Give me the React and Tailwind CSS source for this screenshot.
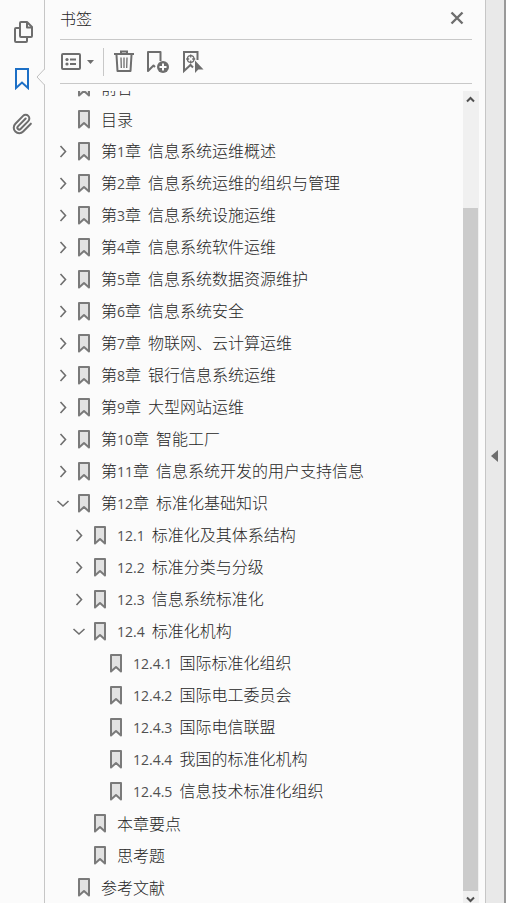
import { useState } from "react"

const BOOKMARKS = [
  { title: "前言" },
  { title: "目录" },
  { title: "第1章  信息系统运维概述", closed: true },
  { title: "第2章  信息系统运维的组织与管理", closed: true },
  { title: "第3章  信息系统设施运维", closed: true },
  { title: "第4章  信息系统软件运维", closed: true },
  { title: "第5章  信息系统数据资源维护", closed: true },
  { title: "第6章  信息系统安全", closed: true },
  { title: "第7章  物联网、云计算运维", closed: true },
  { title: "第8章  银行信息系统运维", closed: true },
  { title: "第9章  大型网站运维", closed: true },
  { title: "第10章  智能工厂", closed: true },
  { title: "第11章  信息系统开发的用户支持信息", closed: true },
  {
    title: "第12章  标准化基础知识",
    children: [
      { title: "12.1  标准化及其体系结构", closed: true },
      { title: "12.2  标准分类与分级", closed: true },
      { title: "12.3  信息系统标准化", closed: true },
      {
        title: "12.4  标准化机构",
        children: [
          { title: "12.4.1  国际标准化组织" },
          { title: "12.4.2  国际电工委员会" },
          { title: "12.4.3  国际电信联盟" },
          { title: "12.4.4  我国的标准化机构" },
          { title: "12.4.5  信息技术标准化组织" },
        ],
      },
      { title: "本章要点" },
      { title: "思考题" },
    ],
  },
  { title: "参考文献" },
]

function PagesIcon() {
  return (
    <svg width="24" height="24" viewBox="0 0 24 24" fill="none" stroke="#6e6e6e" strokeWidth="2" strokeLinejoin="round">
      <path d="M9 8H6Q5 8 5 9V21Q5 22 6 22H16Q17 22 17 21V18" />
      <path d="M10 3Q10 2 11 2H17L22 7V16Q22 17 21 17H11Q10 17 10 16Z" />
      <path d="M17 2.500V7.500H21.500" />
    </svg>
  )
}

function RibbonIcon() {
  return (
    <svg width="16" height="24" viewBox="0 0 16 24" fill="none" stroke="#1c6fc6" strokeWidth="2">
      <path d="M2 3H14V22L8 16.500L2 22Z" />
    </svg>
  )
}

function ClipIcon() {
  return (
    <svg width="22" height="24" viewBox="0 0 24 24" fill="none" stroke="#6e6e6e" strokeWidth="2.200" strokeLinecap="round">
      <path d="M16 6L7.586 14.586A2 2 0 0 0 10.415 17.415L18.829 8.829A4 4 0 1 0 13.172 3.172L4.793 11.723A6 6 0 1 0 13.278 20.208L21.657 11.657" />
    </svg>
  )
}

function OptionsIcon() {
  return (
    <svg width="34" height="20" viewBox="0 0 34 20" fill="none">
      <rect x="2" y="2" width="18" height="15" rx="1" stroke="#6e6e6e" strokeWidth="2" />
      <circle cx="7" cy="7.500" r="1.600" fill="#6e6e6e" />
      <circle cx="7" cy="12" r="1.600" fill="#6e6e6e" />
      <path d="M10 7.500H16M10 12H16" stroke="#6e6e6e" strokeWidth="2" />
      <path d="M27 8H34L30.500 12Z" fill="#6e6e6e" />
    </svg>
  )
}

function TrashIcon() {
  return (
    <svg width="20" height="24" viewBox="0 0 20 24" fill="none" stroke="#6e6e6e" strokeWidth="2">
      <path d="M0 4H20M7 4V1.500H13V4" />
      <path d="M2.500 5L3.500 21H16.500L17.500 5" strokeLinejoin="round" />
      <path d="M7 7.500L7.300 18M10 7.500V18M13 7.500L12.700 18" strokeWidth="1.300" />
    </svg>
  )
}

function AddIcon() {
  return (
    <svg width="24" height="24" viewBox="0 0 24 24" fill="none">
      <path d="M9 17L7.500 15.500L2 21V2H14.500V11" stroke="#6e6e6e" strokeWidth="2" strokeLinejoin="round" />
      <circle cx="17" cy="17" r="6" fill="#6e6e6e" />
      <path d="M17 13.500V20.500M13.500 17H20.500" stroke="#fff" strokeWidth="2" />
    </svg>
  )
}

function TargetIcon() {
  return (
    <svg width="22" height="24" viewBox="0 0 22 24" fill="none">
      <path d="M11 17.500L8.500 15L2 21V2H15.500V10" stroke="#6e6e6e" strokeWidth="2" />
      <circle cx="8.700" cy="9" r="3.300" stroke="#6e6e6e" strokeWidth="1.300" />
      <path d="M8.700 4.500V7.500M8.700 10.500V13.500M4.200 9H7.200M10.200 9H13.200" stroke="#6e6e6e" strokeWidth="1.300" />
      <path d="M13 10.500V23L16.300 19.500H21.500Z" fill="#6e6e6e" />
    </svg>
  )
}

function BookmarkIcon() {
  return (
    <svg className="shrink-0" width="14" height="20" viewBox="0 0 14 20">
      <path d="M2 2H12V18.500L7 14L2 18.500Z" fill="#e2e2e2" stroke="#7a7a7a" strokeWidth="2" strokeLinejoin="round" />
    </svg>
  )
}

// Numbers are set a little smaller than the Chinese text around them
function Title({ text }) {
  return text.split(/([\d.]+)/).map((part, i) =>
    i % 2 ? (
      <span key={i} className="text-[14px] font-normal text-[#505050] font-['Open_Sans','Noto_Sans_CJK_SC',sans-serif]">{part}</span>
    ) : (
      part
    )
  )
}

function TreeItem({ item }) {
  const [open, setOpen] = useState(!item.closed)
  const hasToggle = item.closed || item.children

  return (
    <li>
      <div className="flex h-8 items-center">
        {hasToggle ? (
          <button
            className="flex h-4 w-4 shrink-0 items-center justify-center"
            aria-label={item.title}
            aria-expanded={open}
            onClick={() => setOpen(!open)}>
            <svg width="16" height="16" viewBox="0 0 16 16" fill="none" stroke="#6e6e6e" strokeWidth="1.600">
              <path d={open ? "M2.500 6L8 11L13.500 6" : "M5.500 3L10.500 8.500L5.500 14"} />
            </svg>
          </button>
        ) : (
          <span className="w-4 shrink-0" />
        )}
        <a href="#" className="flex items-center gap-2.5 pl-1.5 whitespace-pre">
          <BookmarkIcon />
          <span><Title text={item.title} /></span>
        </a>
      </div>
      {open && item.children && (
        <ul className="pl-4">
          {item.children.map((child) => (
            <TreeItem key={child.title} item={child} />
          ))}
        </ul>
      )}
    </li>
  )
}

export default function App() {
  return (
    <div className="flex h-screen overflow-hidden bg-[#fbfbfb] text-[16px] leading-6 font-light text-[#262626] font-['Noto_Sans_CJK_SC',sans-serif]">
      {/* Side navigation */}
      <nav className="relative flex w-[45px] shrink-0 flex-col items-center gap-[22px] border-r border-[#c6c6c6] pt-5">
        <button aria-label="页面缩略图"><PagesIcon /></button>
        <button aria-label="书签"><RibbonIcon /></button>
        <button aria-label="附件"><ClipIcon /></button>
        <svg className="absolute top-[68px] -right-px" width="9" height="18" viewBox="0 0 9 18">
          <path d="M9 1L1 9L9 17Z" fill="#fbfbfb" />
          <path d="M8.500 1L1 9L8.500 17" fill="none" stroke="#c0c0c0" />
        </svg>
      </nav>

      {/* Bookmark panel */}
      <section className="flex min-w-0 flex-1 flex-col">
        <header className="mr-[13px] ml-[15px] flex h-10 shrink-0 items-center justify-between border-b border-[#c8c8c8] pr-2 pb-1">
          <h1>书签</h1>
          <button aria-label="关闭">
            <svg width="14" height="14" viewBox="0 0 14 14" stroke="#6e6e6e" strokeWidth="2.400">
              <path d="M1.500 1.500L12.500 12.500M12.500 1.500L1.500 12.500" />
            </svg>
          </button>
        </header>

        <div className="mr-[13px] ml-[15px] flex h-11 shrink-0 items-center border-b border-[#c8c8c8]">
          <button aria-label="选项"><OptionsIcon /></button>
          <span className="mr-2.5 ml-[9px] h-7 w-px bg-[#c8c8c8]" />
          <div className="flex items-center gap-3">
            <button aria-label="删除"><TrashIcon /></button>
            <button aria-label="新建书签"><AddIcon /></button>
            <button aria-label="定位当前书签"><TargetIcon /></button>
          </div>
        </div>

        <div className="mt-[7px] mr-1.5 flex min-h-0 flex-1">
          <div className="min-w-0 flex-1 overflow-hidden pl-2.5">
            <ul className="-mt-5">
              {BOOKMARKS.map((item) => (
                <TreeItem key={item.title} item={item} />
              ))}
            </ul>
          </div>

          {/* Scrollbar */}
          <div className="flex w-4 shrink-0 flex-col bg-[#f0f0f0] pr-px">
            <button className="flex h-[17px] items-center justify-center" aria-label="向上滚动">
              <svg width="9" height="7" viewBox="0 0 9 7" fill="none" stroke="#505050" strokeWidth="2">
                <path d="M1 5.500L4.500 2L8 5.500" />
              </svg>
            </button>
            <div className="mt-[100px] flex-1 bg-[#cbcbcb]" />
            <button className="flex h-3 items-end justify-center" aria-label="向下滚动">
              <svg width="9" height="7" viewBox="0 0 9 7" fill="none" stroke="#505050" strokeWidth="2">
                <path d="M1 1.500L4.500 5L8 1.500" />
              </svg>
            </button>
          </div>
        </div>
      </section>

      {/* Collapse strip */}
      <button
        className="flex w-[21px] shrink-0 items-center border-r-2 border-l border-r-[#999999] border-l-[#c6c6c6] bg-[#e9e9e9] pt-2 pl-[5px]"
        aria-label="折叠面板">
        <svg width="7" height="12" viewBox="0 0 7 12">
          <path d="M7 0V12L0 6Z" fill="#6e6e6e" />
        </svg>
      </button>
    </div>
  )
}
